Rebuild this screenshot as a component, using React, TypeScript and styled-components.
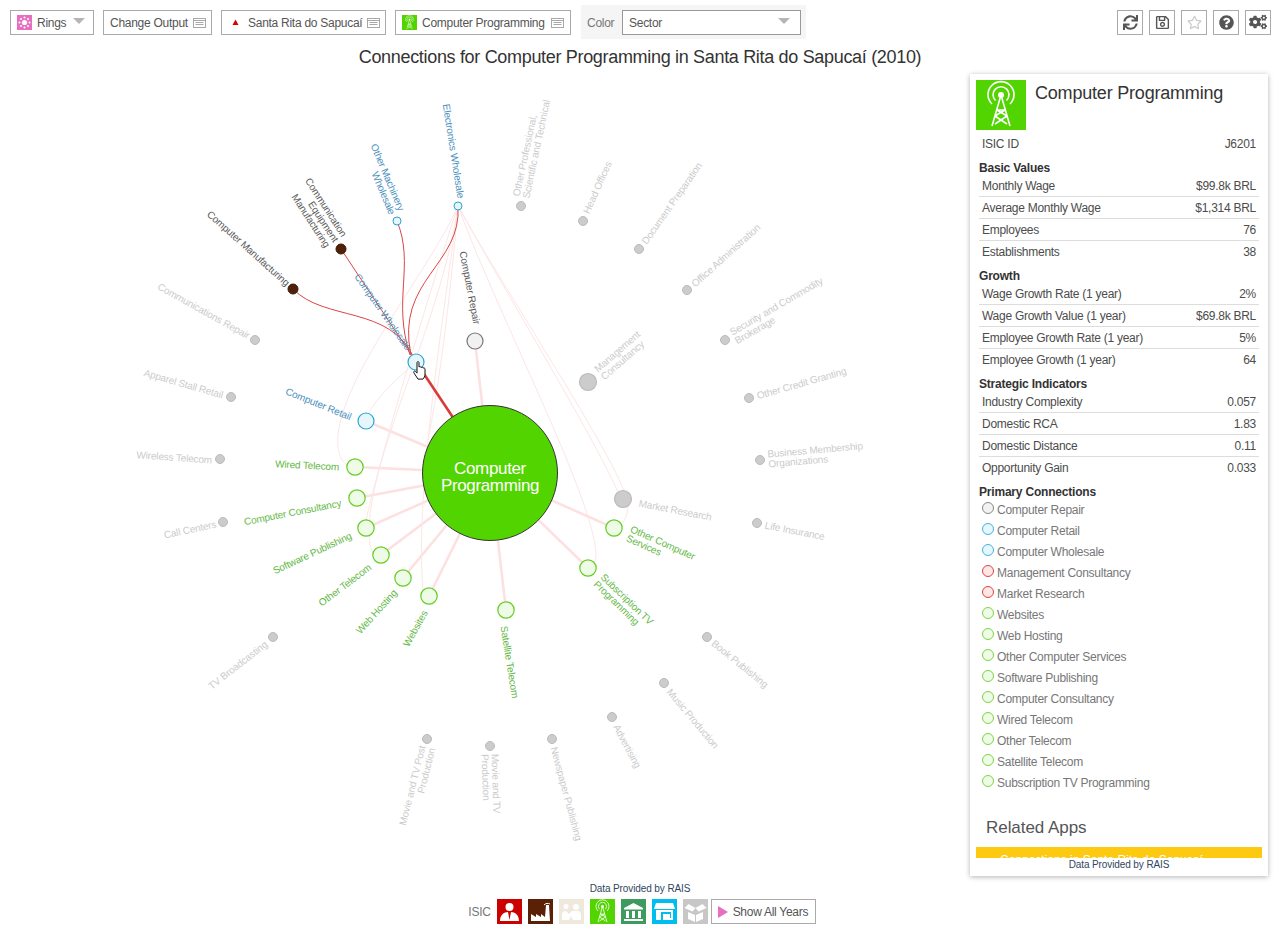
import React from 'react'
import styled, { createGlobalStyle } from 'styled-components'
import { FaSync, FaRegSave, FaRegStar, FaQuestionCircle, FaCogs } from 'react-icons/fa'

const GlobalStyle = createGlobalStyle`
  html, body {
    margin: 0;
    padding: 0;
    background: #fff;
    font-family: "Liberation Sans", Arial, sans-serif;
  }
`

const GREEN = '#52d400'
const CENTER = { x: 490, y: 473 }

type Tone = 'muted' | 'green' | 'blue' | 'dark'
interface NodeItem {
  x: number
  y: number
  r: number
  fill: string
  stroke: string
  lines: string[]
  ax: number
  ay: number
  angle: number
  anchor: 'start' | 'end'
  tone: Tone
}

const gray = { fill: '#ccc', stroke: '#bbb', tone: 'muted' as Tone }
const leaf = { r: 8.2, fill: '#eefbe6', stroke: '#66cc22', tone: 'green' as Tone }
const cyan = { fill: '#e6f6fd', stroke: '#2ba6d0', tone: 'blue' as Tone }
const brown = { r: 5, fill: '#4f2108', stroke: '#3a1a08', tone: 'dark' as Tone }

const nodes: NodeItem[] = [
  { ...gray, x: 521, y: 206, r: 4.5, lines: ['Other Professional,', 'Scientific and Technical'], ax: 521, ay: 197, angle: -78, anchor: 'start' },
  { ...gray, x: 583, y: 221, r: 4.5, lines: ['Head Offices'], ax: 586, ay: 213, angle: -66, anchor: 'start' },
  { ...gray, x: 639, y: 249, r: 4.5, lines: ['Document Preparation'], ax: 644, ay: 243, angle: -55, anchor: 'start' },
  { ...gray, x: 687, y: 290, r: 4.5, lines: ['Office Administration'], ax: 693, ay: 285, angle: -42, anchor: 'start' },
  { ...gray, x: 725, y: 340, r: 4.5, lines: ['Security and Commodity', 'Brokerage'], ax: 733, ay: 337, angle: -30, anchor: 'start' },
  { ...gray, x: 749, y: 398, r: 4.5, lines: ['Other Credit Granting'], ax: 757, ay: 396, angle: -16, anchor: 'start' },
  { ...gray, x: 760, y: 460, r: 4.5, lines: ['Business Membership', 'Organizations'], ax: 768, ay: 459, angle: -5, anchor: 'start' },
  { ...gray, x: 623, y: 499, r: 8.5, lines: ['Market Research'], ax: 639, ay: 503, angle: 11, anchor: 'start' },
  { ...gray, x: 757, y: 523, r: 4.5, lines: ['Life Insurance'], ax: 765, ay: 525, angle: 11, anchor: 'start' },
  { ...gray, x: 707, y: 637, r: 4.5, lines: ['Book Publishing'], ax: 713, ay: 642, angle: 39, anchor: 'start' },
  { ...gray, x: 664, y: 683, r: 4.5, lines: ['Music Production'], ax: 669, ay: 690, angle: 50, anchor: 'start' },
  { ...gray, x: 612, y: 717, r: 4.5, lines: ['Advertising'], ax: 616, ay: 725, angle: 62, anchor: 'start' },
  { ...gray, x: 552, y: 739, r: 4.5, lines: ['Newspaper Publishing'], ax: 554, ay: 747, angle: 75, anchor: 'start' },
  { ...gray, x: 490, y: 746, r: 4.5, lines: ['Movie and TV', 'Production'], ax: 490, ay: 754, angle: 88, anchor: 'start' },
  { ...gray, x: 427, y: 739, r: 4.5, lines: ['Movie and TV Post', 'Production'], ax: 427, ay: 747, angle: -76, anchor: 'end' },
  { ...gray, x: 273, y: 637, r: 4.5, lines: ['TV Broadcasting'], ax: 266, ay: 643, angle: -38, anchor: 'end' },
  { ...gray, x: 223, y: 522, r: 4.5, lines: ['Call Centers'], ax: 216, ay: 524, angle: -12, anchor: 'end' },
  { ...gray, x: 220, y: 459, r: 4.5, lines: ['Wireless Telecom'], ax: 212, ay: 460, angle: 4, anchor: 'end' },
  { ...gray, x: 231, y: 397, r: 4.5, lines: ['Apparel Stall Retail'], ax: 223, ay: 395, angle: 16, anchor: 'end' },
  { ...gray, x: 255, y: 340, r: 4.5, lines: ['Communications Repair'], ax: 249, ay: 336, angle: 29, anchor: 'end' },
  { ...gray, x: 588, y: 382, r: 8.5, lines: ['Management', 'Consultancy'], ax: 599, ay: 374, angle: -41, anchor: 'start' },
  { ...brown, x: 293, y: 289, lines: ['Computer Manufacturing'], ax: 288, ay: 284, angle: 42, anchor: 'end' },
  { ...brown, x: 341, y: 249, lines: ['Communication', 'Equipment', 'Manufacturing'], ax: 336, ay: 241, angle: 57, anchor: 'end' },
  { ...cyan, x: 397, y: 221, r: 4, lines: ['Other Machinery', 'Wholesale'], ax: 397, ay: 212, angle: 67, anchor: 'end' },
  { ...cyan, x: 458, y: 206, r: 4, lines: ['Electronics Wholesale'], ax: 461, ay: 198, angle: 81, anchor: 'end' },
  { ...cyan, x: 416, y: 362, r: 8, lines: ['Computer Wholesale'], ax: 409, ay: 349, angle: 55, anchor: 'end' },
  { x: 475, y: 341, r: 8, fill: '#f1f1f1', stroke: '#777', tone: 'dark', lines: ['Computer Repair'], ax: 477, ay: 324, angle: 79, anchor: 'end' },
  { ...cyan, x: 366, y: 421, r: 8, lines: ['Computer Retail'], ax: 351, ay: 417, angle: 22, anchor: 'end' },
  { ...leaf, x: 355, y: 467, lines: ['Wired Telecom'], ax: 339, ay: 467, angle: 3, anchor: 'end' },
  { ...leaf, x: 357, y: 498, lines: ['Computer Consultancy'], ax: 341, ay: 503, angle: -11, anchor: 'end' },
  { ...leaf, x: 366, y: 528, lines: ['Software Publishing'], ax: 351, ay: 535, angle: -25, anchor: 'end' },
  { ...leaf, x: 381, y: 555, lines: ['Other Telecom'], ax: 370, ay: 566, angle: -37, anchor: 'end' },
  { ...leaf, x: 403, y: 578, lines: ['Web Hosting'], ax: 395, ay: 591, angle: -48, anchor: 'end' },
  { ...leaf, x: 429, y: 596, lines: ['Websites'], ax: 425, ay: 611, angle: -61, anchor: 'end' },
  { ...leaf, x: 506, y: 610, lines: ['Satellite Telecom'], ax: 504, ay: 626, angle: 81, anchor: 'start' },
  { ...leaf, x: 588, y: 568, lines: ['Subscription TV', 'Programming'], ax: 599, ay: 579, angle: 44, anchor: 'start' },
  { ...leaf, x: 614, y: 528, lines: ['Other Computer', 'Services'], ax: 629, ay: 533, angle: 24, anchor: 'start' }
]

const toneColor: Record<Tone, string> = {
  muted: '#cbcbcb',
  green: '#62b844',
  blue: '#4a90bd',
  dark: '#5a5a5a'
}

const primaryTargets = [
  [475, 341], [416, 362], [366, 421], [355, 467], [357, 498], [366, 528], [381, 555],
  [403, 578], [429, 596], [506, 610], [588, 568], [614, 528]
]

const faintCurves = [
  'M458 206 C 430 270, 345 370, 338 435 C 336 456, 344 464, 350 467',
  'M458 206 C 430 290, 385 440, 366 520',
  'M458 206 C 440 330, 360 470, 370 545 C 372 553, 376 555, 381 555',
  'M458 206 C 440 340, 415 500, 423 590',
  'M458 206 C 450 300, 440 380, 428 440',
  'M458 206 C 500 320, 595 500, 596 555 C 596 563, 592 566, 588 568',
  'M458 206 C 510 300, 625 470, 628 505 C 628 518, 622 525, 616 528',
  'M458 206 C 510 300, 590 430, 618 492',
  'M416 362 C 396 380, 372 400, 366 421'
]

const redCurves = [
  'M293 289 C 325 322, 390 305, 414 358',
  'M341 249 L 416 362',
  'M397 221 C 415 265, 392 300, 410 355',
  'M458 206 C 462 265, 395 280, 411 355'
]

const sectorPalette = ['#cc0000', '#5a2107', '#eee8dd', GREEN, '#3f9a5f', '#00bdf0', '#c7c7c7']

const TowerIcon = ({ size }: { size: number }) => (
  <svg width={size} height={size} viewBox="0 0 50 50" fill="none" stroke="#fff" strokeWidth="1.6">
    <circle cx="25" cy="15" r="3" fill="#fff" stroke="none" />
    <path d="M19.5 20.5a8 8 0 1 1 11 0M16 24a13 13 0 1 1 18 0" />
    <path d="M25 15L16 46M25 15l9 31M21 30h8M19 36l12 8M31 36l-12 8M21 30l10 6M29 30l-10 6" />
  </svg>
)

const SectorGlyph = ({ index }: { index: number }) => {
  if (index === 3) return <TowerIcon size={25} />
  return (
    <svg width="25" height="25" viewBox="0 0 25 25" fill="#fff" stroke="none">
      {index === 0 && (
        <path d="M12.500 4a4 4 0 1 1 0 8 4 4 0 0 1 0-8zM3 22c0-6 4-9 8-9l1.500 8 1.500-8c4 0 8 3 8 9z" />
      )}
      {index === 1 && (
        <>
          <path d="M3 22v-7l5 3v-3l5 3v-3l4 3 1-12h3l1 16z" />
          <path d="M16 6c2-2 4-2 6-1" fill="none" stroke="#fff" />
        </>
      )}
      {index === 2 && (
        <path d="M7 5a2.500 2.500 0 1 1 0 5 2.500 2.500 0 0 1 0-5zM17 5a3 3 0 1 1 0 6 3 3 0 0 1 0-6zM3 21v-6c0-2 2-3 4-3l3 3 3-3h6c2 0 3 2 3 4v5h-8l-2-4-2 4z" />
      )}
      {index === 4 && <path d="M12.500 4L22 9v1.500H3V9zM5 12h3v7H5zM11 12h3v7h-3zM17 12h3v7h-3zM3 20h19v2H3z" />}
      {index === 5 && (
        <path fillRule="evenodd" d="M4 4h17l2 6H2zM4 11h17v10H4zM9 13v8h2v-6h7v4h1v-6z" />
      )}
      {index === 6 && (
        <path d="M12.500 9l7-4 4 4-8 3.500zM12.500 9l-7-4-4 4 8 3.500zM5 13l7 3v7l-7-3zM20 13l-7 3v7l7-3z" />
      )}
    </svg>
  )
}

const ListGlyph = () => (
  <ListIcon width="13" height="10" viewBox="0 0 13 10" fill="none" stroke="#a8a8a8">
    <rect x=".5" y=".5" width="12" height="9" />
    <path d="M.5 2.500h12M2.500 4.500h8M2.500 6.500h8" />
  </ListIcon>
)

const statGroups = [
  {
    title: 'Basic Values',
    rows: [
      ['Monthly Wage', '$99.8k BRL'],
      ['Average Monthly Wage', '$1,314 BRL'],
      ['Employees', '76'],
      ['Establishments', '38']
    ]
  },
  {
    title: 'Growth',
    rows: [
      ['Wage Growth Rate (1 year)', '2%'],
      ['Wage Growth Value (1 year)', '$69.8k BRL'],
      ['Employee Growth Rate (1 year)', '5%'],
      ['Employee Growth (1 year)', '64']
    ]
  },
  {
    title: 'Strategic Indicators',
    rows: [
      ['Industry Complexity', '0.057'],
      ['Domestic RCA', '1.83'],
      ['Domestic Distance', '0.11'],
      ['Opportunity Gain', '0.033']
    ]
  }
]

const connections: [string, 'gray' | 'cyan' | 'red' | 'green'][] = [
  ['Computer Repair', 'gray'],
  ['Computer Retail', 'cyan'],
  ['Computer Wholesale', 'cyan'],
  ['Management Consultancy', 'red'],
  ['Market Research', 'red'],
  ['Websites', 'green'],
  ['Web Hosting', 'green'],
  ['Other Computer Services', 'green'],
  ['Software Publishing', 'green'],
  ['Computer Consultancy', 'green'],
  ['Wired Telecom', 'green'],
  ['Other Telecom', 'green'],
  ['Satellite Telecom', 'green'],
  ['Subscription TV Programming', 'green']
]

export default function App() {
  return (
    <Page>
      <GlobalStyle />
      <Toolbar>
        <ToolButton $width={84}>
          <Swatch $bg="#e86fc0">
            <svg width="15" height="15" viewBox="0 0 15 15" fill="#fff">
              <circle cx="7.500" cy="7.500" r="2.600" />
              <circle cx="7.500" cy="2.500" r="1" />
              <circle cx="7.500" cy="12.500" r="1" />
              <circle cx="2.500" cy="7.500" r="1" />
              <circle cx="12.500" cy="7.500" r="1" />
              <circle cx="4" cy="4" r="1" />
              <circle cx="11" cy="4" r="1" />
              <circle cx="4" cy="11" r="1" />
              <circle cx="11" cy="11" r="1" />
            </svg>
          </Swatch>
          Rings
          <Caret />
        </ToolButton>
        <ToolButton $width={109}>
          Change Output
          <ListGlyph />
        </ToolButton>
        <ToolButton $width={165}>
          <Swatch $bg="transparent">
            <svg width="15" height="15" viewBox="0 0 15 15" fill="#d80000">
              <path d="M7.500 4.500l3 5.500h-6z" />
            </svg>
          </Swatch>
          Santa Rita do Sapucaí
          <ListGlyph />
        </ToolButton>
        <ToolButton $width={176}>
          <Swatch $bg={GREEN}>
            <TowerIcon size={15} />
          </Swatch>
          Computer Programming
          <ListGlyph />
        </ToolButton>
        <ColorGroup>
          <ColorLabel>Color</ColorLabel>
          <SelectBox>
            Sector
            <SelectCaret />
          </SelectBox>
        </ColorGroup>
        <RightTools>
          <IconButton><FaSync size={15} /></IconButton>
          <IconButton><FaRegSave size={15} /></IconButton>
          <IconButton $faded><FaRegStar size={15} /></IconButton>
          <IconButton><FaQuestionCircle size={15} /></IconButton>
          <IconButton><FaCogs size={18} /></IconButton>
        </RightTools>
      </Toolbar>

      <Title>Connections for Computer Programming in Santa Rita do Sapucaí (2010)</Title>

      <Content>
        <Chart viewBox="0 74 970 802" width="970" height="802">
          {primaryTargets.map(([x, y]) => (
            <line key={`${x}-${y}`} x1={CENTER.x} y1={CENTER.y} x2={x} y2={y} stroke="#fde0e0" strokeWidth="2.500" />
          ))}
          {faintCurves.map((d) => (
            <path key={d} d={d} fill="none" stroke="#fde6e6" strokeWidth="1" />
          ))}
          <line x1={CENTER.x} y1={CENTER.y} x2={416} y2={362} stroke="#d93a3a" strokeWidth="2.500" />
          {redCurves.map((d) => (
            <path key={d} d={d} fill="none" stroke="#dd4444" strokeWidth="1" />
          ))}
          {nodes.map((n) => (
            <circle key={n.lines[0]} cx={n.x} cy={n.y} r={n.r} fill={n.fill} stroke={n.stroke} strokeWidth={n.r > 6 ? 1.200 : 1} />
          ))}
          {nodes.map((n) => (
            <NodeLabel
              key={n.lines[0]}
              transform={`rotate(${n.angle} ${n.ax} ${n.ay})`}
              textAnchor={n.anchor}
              fill={toneColor[n.tone]}
            >
              {n.lines.map((line, i) => (
                <tspan key={line} x={n.ax} y={n.ay + 3.500 - (n.lines.length - 1) * 5 + i * 10}>
                  {line}
                </tspan>
              ))}
            </NodeLabel>
          ))}
          <circle cx={CENTER.x} cy={CENTER.y} r="67.500" fill={GREEN} stroke="#333" strokeWidth="1" />
          <CenterLabel x={CENTER.x} y="474" textAnchor="middle">Computer</CenterLabel>
          <CenterLabel x={CENTER.x} y="491" textAnchor="middle">Programming</CenterLabel>
          <path
            d="M417 363c0-2 2-2 2 0v4c1-1 2 0 2 .5 1-.8 2 0 2 .6 1-.6 2 0 2 1v5c0 2-1 4-2 5h-5l-4-6c-1-2 1-3 2-1l1 1z"
            fill="#fff"
            stroke="#111"
            strokeWidth="1"
          />
        </Chart>

        <Panel>
          <PanelScroll>
            <PanelHeader>
              <PanelIcon>
                <TowerIcon size={50} />
              </PanelIcon>
              <PanelTitle>Computer Programming</PanelTitle>
            </PanelHeader>
            <IdRow>
              <span>ISIC ID</span>
              <span>J6201</span>
            </IdRow>
            {statGroups.map((group) => (
              <div key={group.title}>
                <GroupTitle>{group.title}</GroupTitle>
                {group.rows.map(([label, value]) => (
                  <StatRow key={label}>
                    <span>{label}</span>
                    <span>{value}</span>
                  </StatRow>
                ))}
              </div>
            ))}
            <GroupTitle>Primary Connections</GroupTitle>
            {connections.map(([name, color]) => (
              <ConnectionRow key={name}>
                <Ring $color={color} />
                {name}
              </ConnectionRow>
            ))}
            <RelatedTitle>Related Apps</RelatedTitle>
            <RelatedCard>Connections in Santa Rita do Sapucaí</RelatedCard>
          </PanelScroll>
          <PanelFooter>Data Provided by RAIS</PanelFooter>
        </Panel>
      </Content>

      <Footer>
        <FooterSource>Data Provided by RAIS</FooterSource>
        <FooterRow>
          <IsicLabel>ISIC</IsicLabel>
          {sectorPalette.map((bg, i) => (
            <SectorTile key={bg} $bg={bg}>
              <SectorGlyph index={i} />
            </SectorTile>
          ))}
          <PlayButton>
            <PlayTriangle />
            Show All Years
          </PlayButton>
        </FooterRow>
      </Footer>
    </Page>
  )
}

const Page = styled.div`
  width: 1280px;
  height: 929px;
  overflow: hidden;
  display: flex;
  flex-direction: column;
  color: #4c4c4c;
  letter-spacing: -0.27px;
`
const Toolbar = styled.div`
  display: flex;
  align-items: center;
  height: 34px;
  padding: 5px 9px 0 10px;
  gap: 9px;
`
const ToolButton = styled.div<{ $width: number }>`
  box-sizing: border-box;
  width: ${({ $width }) => $width}px;
  height: 25px;
  display: flex;
  align-items: center;
  gap: 5px;
  padding: 1px 6px 0;
  border: 1px solid #aaa;
  background: #fff;
  font-size: 12px;
  color: #555;
  white-space: nowrap;
`
const Swatch = styled.span<{ $bg: string }>`
  width: 15px;
  height: 15px;
  display: flex;
  background: ${({ $bg }) => $bg};
`
const Caret = styled.span`
  margin-left: auto;
  margin-right: 2px;
  margin-bottom: 3px;
  width: 0;
  height: 0;
  border-left: 6px solid transparent;
  border-right: 6px solid transparent;
  border-top: 6px solid #b5b5b5;
`
const ListIcon = styled.svg`
  margin-left: auto;
  flex-shrink: 0;
`
const ColorGroup = styled.div`
  box-sizing: border-box;
  width: 225px;
  height: 34px;
  margin-left: 1px;
  display: flex;
  align-items: center;
  padding: 0 5px 0 6px;
  background: #f5f5f5;
`
const ColorLabel = styled.span`
  width: 35px;
  padding-top: 1px;
  font-size: 12px;
  color: #777;
`
const SelectBox = styled.div`
  box-sizing: border-box;
  flex: 1;
  height: 25px;
  display: flex;
  align-items: center;
  justify-content: space-between;
  padding: 1px 8px 0 6px;
  border: 1px solid #999;
  background: #fff;
  font-size: 12px;
  color: #555;
`
const SelectCaret = styled(Caret)`
  margin-right: 2px;
`
const RightTools = styled.div`
  margin-left: auto;
  display: flex;
  gap: 6px;
`
const IconButton = styled.div<{ $faded?: boolean }>`
  box-sizing: border-box;
  width: 26px;
  height: 25px;
  display: flex;
  align-items: center;
  justify-content: center;
  border: 1px solid #aaa;
  color: ${({ $faded }) => ($faded ? '#ccc' : '#555')};
`
const Title = styled.div`
  margin-top: 6px;
  height: 24px;
  line-height: 24px;
  text-align: center;
  font-size: 18px;
  letter-spacing: -0.32px;
  color: #333;
`
const Content = styled.div`
  margin-top: 5px;
  display: flex;
  height: 802px;
`
const Chart = styled.svg`
  flex-shrink: 0;
  display: block;
`
const NodeLabel = styled.text`
  font-size: 10px;
  letter-spacing: -0.15px;
`
const CenterLabel = styled.text`
  font-size: 17px;
  letter-spacing: -0.35px;
  fill: #fff;
`
const Panel = styled.div`
  box-sizing: border-box;
  width: 298px;
  height: 802px;
  display: flex;
  flex-direction: column;
  background: #fff;
  box-shadow: 0 1px 5px rgba(0, 0, 0, 0.3);
`
const PanelScroll = styled.div`
  flex: 1;
  overflow: hidden;
  padding: 6px 6px 0;
`
const PanelHeader = styled.div`
  display: flex;
  height: 53px;
`
const PanelIcon = styled.div`
  width: 50px;
  height: 50px;
  background: ${GREEN};
`
const PanelTitle = styled.div`
  margin-left: 9px;
  font-size: 18px;
  line-height: 26px;
  letter-spacing: -0.2px;
  color: #333;
`
const IdRow = styled.div`
  display: flex;
  justify-content: space-between;
  align-items: center;
  height: 22px;
  padding: 0 6px;
  font-size: 12px;
`
const GroupTitle = styled.div`
  margin-top: 5px;
  padding-left: 3px;
  height: 15px;
  line-height: 17px;
  font-size: 12px;
  font-weight: bold;
  letter-spacing: -0.2px;
  color: #333;
`
const StatRow = styled.div`
  box-sizing: border-box;
  display: flex;
  justify-content: space-between;
  align-items: center;
  height: 22px;
  margin: 0 3px;
  padding: 0 3px;
  font-size: 12px;
  border-bottom: 1px solid #ddd;
  &:last-child {
    border-bottom: none;
  }
`
const ringColors = {
  gray: ['#f2f2f2', '#888'],
  cyan: ['#e6f6fd', '#45b4dc'],
  red: ['#fde6e6', '#dd4444'],
  green: ['#eefbe6', '#7bd640']
}
const ConnectionRow = styled.div`
  display: flex;
  align-items: center;
  gap: 3px;
  height: 21px;
  padding-left: 6px;
  font-size: 12px;
  color: #777;
`
const Ring = styled.span<{ $color: keyof typeof ringColors }>`
  box-sizing: border-box;
  width: 12px;
  height: 12px;
  margin-top: -3px;
  border-radius: 50%;
  background: ${({ $color }) => ringColors[$color][0]};
  border: 1px solid ${({ $color }) => ringColors[$color][1]};
`
const RelatedTitle = styled.div`
  margin-top: 23px;
  padding-left: 10px;
  height: 24px;
  line-height: 24px;
  font-size: 17px;
  letter-spacing: -0.05px;
  color: #555;
`
const RelatedCard = styled.div`
  margin-top: 7px;
  height: 40px;
  padding: 6px 24px 0;
  background: #fec911;
  color: #fff;
  font-size: 12px;
  letter-spacing: 0;
`
const PanelFooter = styled.div`
  height: 18px;
  padding-bottom: 4px;
  box-sizing: border-box;
  text-align: center;
  font-size: 10px;
  line-height: 14px;
  letter-spacing: -0.1px;
  color: #2f4660;
`
const Footer = styled.div`
  margin-top: 7px;
  display: flex;
  flex-direction: column;
  align-items: center;
`
const FooterSource = styled.div`
  height: 16px;
  line-height: 12px;
  font-size: 10px;
  letter-spacing: -0.1px;
  color: #2f4660;
`
const FooterRow = styled.div`
  display: flex;
  align-items: center;
  gap: 6px;
  padding-left: 4px;
`
const IsicLabel = styled.span`
  font-size: 12px;
  color: #777;
`
const SectorTile = styled.div<{ $bg: string }>`
  width: 25px;
  height: 25px;
  background: ${({ $bg }) => $bg};
`
const PlayButton = styled.div`
  box-sizing: border-box;
  width: 105px;
  height: 25px;
  margin-left: -3px;
  display: flex;
  align-items: center;
  gap: 5px;
  padding-left: 6px;
  border: 1px solid #aaa;
  font-size: 12px;
  color: #555;
  white-space: nowrap;
`
const PlayTriangle = styled.span`
  width: 0;
  height: 0;
  border-top: 6px solid transparent;
  border-bottom: 6px solid transparent;
  border-left: 10px solid #e86fc0;
`
